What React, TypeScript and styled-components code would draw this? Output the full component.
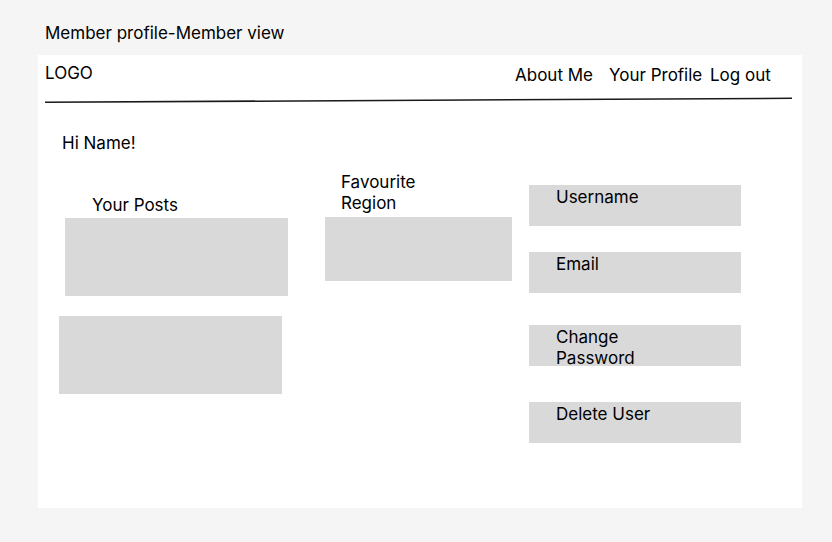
import React from "react";
import styled, { createGlobalStyle } from "styled-components";

const Global = createGlobalStyle`
  html, body { margin: 0; padding: 0; background: #f5f5f5; }
  body {
    font-family: Inter, "Noto Sans", sans-serif;
    font-size: 17px;
    line-height: 21px;
    color: #000;
  }
`;

const Page = styled.div`
  width: 832px;
  height: 542px;
  padding-top: 23px;
  box-sizing: border-box;
`;

const PageTitle = styled.div`
  margin-left: 45px;
  height: 21px;
  margin-bottom: 11px;
`;

const Frame = styled.div`
  margin-left: 38px;
  width: 764px;
  height: 453px;
  background: #fff;
  display: flex;
  flex-direction: column;
`;

const Header = styled.div`
  display: flex;
  align-items: flex-start;
  padding: 8px 0 0 7px;
  height: 21px;
`;

const Logo = styled.div`
  width: 470px;
`;

const Nav = styled.nav`
  display: flex;
  padding-top: 1.7px;
`;

const NavLink = styled.span<{ $w?: number }>`
  width: ${(p) => (p.$w ? `${p.$w}px` : "auto")};
  white-space: nowrap;
`;

const Divider = styled.svg`
  display: block;
  margin: 13px 0 0 7px;
`;

const Greeting = styled.div`
  margin: 29px 0 0 24px;
`;

const Row = styled.div`
  display: flex;
  align-items: flex-start;
  margin-top: 16.8px;
  padding-left: 21px;
`;

const Column = styled.div<{ $top: number; $w: number; $gap: number }>`
  display: flex;
  flex-direction: column;
  align-items: flex-start;
  padding-top: ${(p) => p.$top}px;
  width: ${(p) => p.$w}px;
  margin-left: ${(p) => p.$gap}px;
`;

const SectionTitle = styled.div<{ $indent: number }>`
  margin-left: ${(p) => p.$indent}px;
`;

const Block = styled.div<{ $w: number; $h: number; $top: number; $left?: number }>`
  width: ${(p) => p.$w}px;
  height: ${(p) => p.$h}px;
  margin-top: ${(p) => p.$top}px;
  margin-left: ${(p) => p.$left ?? 0}px;
  background: #d9d9d9;
`;

const Field = styled.div<{ $top: number }>`
  width: 212px;
  height: 41px;
  margin-top: ${(p) => p.$top}px;
  background: #d9d9d9;
  box-sizing: border-box;
  padding: 2px 0 0 27px;
  overflow: visible;
`;

export default function App() {
  return (
    <>
      <Global />
      <Page>
        <PageTitle>Member profile-Member view</PageTitle>
        <Frame>
          <Header>
            <Logo>LOGO</Logo>
            <Nav>
              <NavLink $w={94}>About Me</NavLink>
              <NavLink $w={101}>Your Profile</NavLink>
              <NavLink>Log out</NavLink>
            </Nav>
          </Header>
          <Divider width="748" height="7" viewBox="0 0 748 7">
            <line x1="0" y1="5.3" x2="747" y2="1.3" stroke="#1a1a1a" strokeWidth="1.6" />
          </Divider>
          <Greeting>Hi Name!</Greeting>
          <Row>
            <Column $top={24.3} $w={229} $gap={0}>
              <SectionTitle $indent={33}>Your Posts</SectionTitle>
              <Block $w={223} $h={78} $top={1.7} $left={6} />
              <Block $w={223} $h={78} $top={20} />
            </Column>
            <Column $top={1} $w={187} $gap={37}>
              <SectionTitle $indent={16}>
                Favourite
                <br />
                Region
              </SectionTitle>
              <Block $w={187} $h={64} $top={3.7} />
            </Column>
            <Column $top={14} $w={212} $gap={17}>
              <Field $top={0}>Username</Field>
              <Field $top={26}>Email</Field>
              <Field $top={32}>
                Change
                <br />
                Password
              </Field>
              <Field $top={36}>Delete User</Field>
            </Column>
          </Row>
        </Frame>
      </Page>
    </>
  );
}
